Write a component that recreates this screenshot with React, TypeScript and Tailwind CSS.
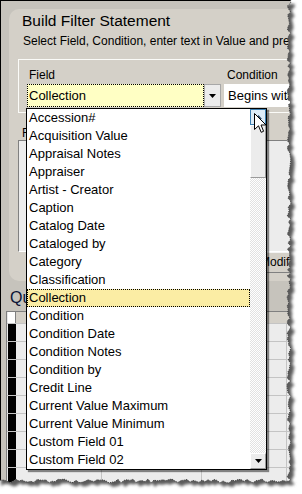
import React from "react";

const items = [
  "Accession#",
  "Acquisition Value",
  "Appraisal Notes",
  "Appraiser",
  "Artist - Creator",
  "Caption",
  "Catalog Date",
  "Cataloged by",
  "Category",
  "Classification",
  "Collection",
  "Condition",
  "Condition Date",
  "Condition Notes",
  "Condition by",
  "Credit Line",
  "Current Value Maximum",
  "Current Value Minimum",
  "Custom Field 01",
  "Custom Field 02",
];

function TornEdge() {
  let s = 17;
  const r = () => {
    s = (s * 9301 + 49297) % 233280;
    return s / 233280;
  };
  const right: [number, number][] = [];
  for (let y = 0; y <= 480; y += 3) right.push([289 + r() * 4 - 2, y]);
  const bottom: [number, number][] = [];
  for (let x = 289; x >= -3; x -= 3) bottom.push([x, 481 + r() * 4 - 2]);
  const pts = [...right, ...bottom];
  const edge = "M" + pts.map((p) => p[0].toFixed(1) + "," + p[1].toFixed(1)).join(" L");
  const shape = "M0,-2 " + edge.replace("M", "L") + " L-3,483 L-3,-2 Z";
  const outside = "M-20,-20 H330 V520 H-20 Z " + shape;
  return (
    <svg className="absolute left-0 top-0 pointer-events-none" width={302} height={494}>
      <defs>
        <filter id="tb" x="-10%" y="-10%" width="120%" height="120%">
          <feGaussianBlur stdDeviation="1.6" />
        </filter>
        <clipPath id="outc">
          <path d={outside} clipRule="evenodd" />
        </clipPath>
      </defs>
      <path d={outside} fill="#ffffff" fillRule="evenodd" />
      <g clipPath="url(#outc)">
        <path d={shape} transform="translate(4,4)" fill="#5a5a5a" filter="url(#tb)" />
      </g>
      <path d={edge} stroke="#3a3a3a" strokeWidth={0.9} fill="none" strokeDasharray="1.2 1" />
    </svg>
  );
}

function Cursor() {
  return (
    <svg className="absolute left-[254px] top-[113px] pointer-events-none" width={14} height={22} viewBox="0 0 14 22">
      <path
        d="M0.5,0.5 L0.5,16.5 L4.5,12.8 L7.2,19.3 L9.6,18.3 L7,12 L12,12 Z"
        fill="#ffffff"
        stroke="#000000"
        strokeWidth={1}
        strokeLinejoin="miter"
      />
    </svg>
  );
}

function DropList() {
  return (
    <div className="absolute left-[26px] top-[108px] w-[241px] h-[362px] border border-black bg-white flex shadow-[2px_2px_1px_rgba(0,0,0,0.45)]">
      <div className="w-[223px] flex flex-col">
        {items.map((it) =>
          it === "Collection" ? (
            <div
              key={it}
              className="h-[18px] leading-[16px] text-[13px] pl-[1px] bg-[#fbeda4] border border-dotted border-black text-black whitespace-nowrap"
            >
              {it}
            </div>
          ) : (
            <div key={it} className="h-[18px] leading-[18px] text-[13px] pl-[2px] text-black whitespace-nowrap">
              {it}
            </div>
          )
        )}
      </div>
      <div className="w-[16px] flex flex-col">
        <div className="h-[16px] border border-[#3c7fb1] bg-[#dcecf8] flex items-center justify-center">
          <svg width={7} height={4} viewBox="0 0 7 4">
            <path d="M0,4 L3.5,0 L7,4 Z" fill="#2c4a6a" />
          </svg>
        </div>
        <div className="h-[53px] bg-[#ececec] border-t border-l border-t-white border-l-white border-r border-b border-r-[#9a9a9a] border-b-[#9a9a9a]" />
        <div className="flex-1 bg-[repeating-conic-gradient(#e2e2e2_0_25%,#ffffff_0_50%)] bg-[length:2px_2px]" />
        <div className="h-[16px] bg-[#ececec] border-t border-l border-t-white border-l-white border-r border-b border-r-[#9a9a9a] border-b-[#9a9a9a] flex items-center justify-center">
          <svg width={7} height={4} viewBox="0 0 7 4">
            <path d="M0,0 L7,0 L3.5,4 Z" fill="#000" />
          </svg>
        </div>
      </div>
    </div>
  );
}

function Grid() {
  const rows = Array.from({ length: 9 });
  return (
    <div className="ml-[-3px] mt-[4.5px] w-[300px] border-t border-l border-[#808080] flex flex-col">
      <div className="h-[11px] flex">
        <div className="w-[1px] bg-[#e8e8e8]" />
        <div className="w-[8px] bg-white border-r border-[#808080]" />
        <div className="flex-1 bg-[#d4d0c8]" />
      </div>
      {rows.map((_, i) => (
        <div key={i} className="h-[18px] flex border-t border-[#c4c4c4]">
          <div className="w-[1px] bg-[#e8e8e8]" />
          <div className="w-[8px] bg-black" />
          <div className="w-[86px] bg-[#ececec] border-r border-[#c4c4c4]" />
          <div className="w-[100px] bg-[#ececec] border-r border-[#c4c4c4]" />
          <div className="w-[85px] bg-[#ececec] border-r border-[#c4c4c4]" />
          <div className="flex-1 bg-[#ececec]" />
        </div>
      ))}
    </div>
  );
}

export default function App() {
  return (
    <div className="relative w-[302px] h-[494px] bg-white overflow-hidden font-['Liberation_Sans',Arial,sans-serif]">
      <div className="w-[302px] h-[494px] border-l border-t border-black bg-[#c6c3bc] pl-[8px] pt-[8px] flex flex-col">
        <div className="w-[300px] h-[272px] shrink-0 rounded-[10px] bg-[#d4d0c8] pt-[3px] flex flex-col">
          <div className="pl-[13px] text-[15.5px] leading-[18px] text-black whitespace-nowrap">Build Filter Statement</div>
          <div className="mt-[4px] pl-[14px] text-[12px] leading-[15px] text-black whitespace-nowrap">
            Select Field, Condition, enter text in Value and press Add
          </div>
          <div className="mt-[10px] ml-[9px] h-[54px] shrink-0 border border-[#fbfbf8] pt-[8px] flex flex-col">
            <div className="flex text-[12px] leading-[14px] text-black">
              <div className="w-[208px] pl-[10px]">Field</div>
              <div>Condition</div>
            </div>
            <div className="mt-[2px] ml-[8px] h-[23px] flex">
              <div className="w-[177px] bg-[#ffffc4] border border-dotted border-black text-[13px] leading-[21px] pl-[1px] text-black">
                Collection
              </div>
              <div className="w-[17px] bg-[#ececec] border border-[#a8a8a8] flex items-center justify-center">
                <svg width={7} height={4} viewBox="0 0 7 4">
                  <path d="M0,0 L7,0 L3.5,4 Z" fill="#000" />
                </svg>
              </div>
              <div className="ml-[3px] flex-1 bg-white text-[13px] leading-[23px] pl-[4px] text-black whitespace-nowrap">
                Begins with
              </div>
            </div>
          </div>
          <div className="mt-[13px] pl-[13px] text-[12px] leading-[14px] text-black">Filter</div>
          <div className="ml-[9px] h-[112px] shrink-0 border-t border-l border-[#808080] border-b border-r border-b-white border-r-white bg-[#ececec]" />
          <div className="ml-[236px] h-[21px] shrink-0 w-[80px] border-t border-b border-t-[#f4f4f4] border-b-[#808080] bg-[#d4d0c8] text-[12px] leading-[19px] pl-[15px] text-black">
            Modify
          </div>
        </div>
        <div className="mt-[7.5px] pl-[1px] text-[16px] leading-[18px] text-[#0b1436] whitespace-nowrap">Query</div>
        <Grid />
      </div>
      <DropList />
      <Cursor />
      <TornEdge />
    </div>
  );
}
